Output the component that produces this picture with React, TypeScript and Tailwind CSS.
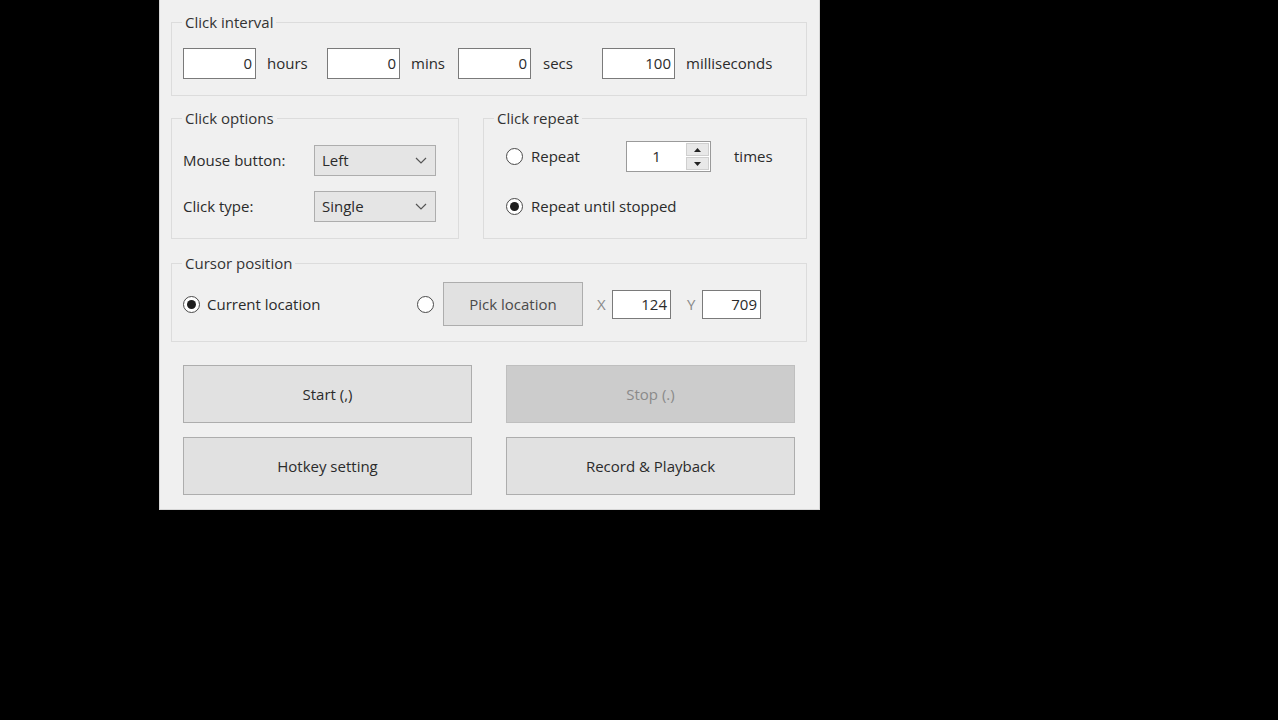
import React from 'react';

const font = { fontFamily: '"Segoe UI", "Open Sans", "Liberation Sans", sans-serif' };

function Radio({ checked }: { checked?: boolean }) {
  return (
    <span className="flex h-[17px] w-[17px] shrink-0 items-center justify-center rounded-full border border-[#4a4a4a] bg-white">
      {checked && <span className="h-[9px] w-[9px] rounded-full bg-[#1e1e1e]" />}
    </span>
  );
}

function NumBox({ value, className }: { value: string; className: string }) {
  return (
    <div className={`flex items-center justify-end border border-[#7a7a7a] bg-white pr-[3px] text-[#2b2b2b] ${className}`}>
      {value}
    </div>
  );
}

function Combo({ value }: { value: string }) {
  return (
    <div className="flex h-[31px] w-[122px] items-center justify-between border border-[#adadad] bg-[#e5e5e5] pl-[7px] pr-[8px] text-[#2b2b2b]">
      <span>{value}</span>
      <svg width="12" height="7" viewBox="0 0 12 7">
        <path d="M1 1l5 5 5-5" stroke="#555" strokeWidth="1.2" fill="none" />
      </svg>
    </div>
  );
}

// groupbox: fieldset + legend, padding lives on the inner div so the legend stays put
function Group({ title, className, children }: { title: string; className: string; children: React.ReactNode }) {
  return (
    <fieldset className={`border border-[#dcdcdc] ${className}`}>
      <legend className="ml-[10px] px-[3px] text-[15px] leading-[18px] text-[#333]">{title}</legend>
      {children}
    </fieldset>
  );
}

function WinButton({ label, disabled }: { label: string; disabled?: boolean }) {
  return (
    <div
      className={`flex h-[58px] w-[289px] items-center justify-center border ${
        disabled ? 'border-[#bfbfbf] bg-[#cccccc] text-[#8a8a8a]' : 'border-[#adadad] bg-[#e1e1e1] text-[#2b2b2b]'
      }`}
    >
      {label}
    </div>
  );
}

export default function App() {
  return (
    <div className="min-h-screen bg-black" style={font}>
      <div className="ml-[159px] h-[510px] w-[661px] border-x border-b border-[#d6d6d6] bg-[#f0f0f0] pl-[11px] pr-[12px] pt-[13px] text-[15px] text-[#2b2b2b]">
        {/* Click interval */}
        <Group title="Click interval" className="pb-[16px]">
          <div className="flex items-center pl-[11px] pt-[17px]">
            <NumBox value="0" className="h-[31px] w-[73px]" />
            <span className="ml-[11px] w-[60px]">hours</span>
            <NumBox value="0" className="h-[31px] w-[73px]" />
            <span className="ml-[11px] w-[47px]">mins</span>
            <NumBox value="0" className="h-[31px] w-[73px]" />
            <span className="ml-[12px] w-[59px]">secs</span>
            <NumBox value="100" className="h-[31px] w-[73px]" />
            <span className="ml-[11px]">milliseconds</span>
          </div>
        </Group>

        {/* Options + repeat */}
        <div className="mt-[13px] flex gap-[24px]">
          <Group title="Click options" className="w-[288px] pb-[16px]">
            <div className="flex flex-col gap-[15px] pl-[11px] pt-[18px]">
              <div className="flex items-center">
                <span className="w-[131px]">Mouse button:</span>
                <Combo value="Left" />
              </div>
              <div className="flex items-center">
                <span className="w-[131px]">Click type:</span>
                <Combo value="Single" />
              </div>
            </div>
          </Group>

          <Group title="Click repeat" className="w-[324px] pb-[22px]">
            <div className="flex flex-col gap-[24px] pl-[22px] pt-[14px]">
              <div className="flex h-[31px] items-center">
                <div className="flex w-[120px] items-center gap-[8px]">
                  <Radio />
                  <span>Repeat</span>
                </div>
                <div className="flex h-[31px] w-[85px] border border-[#9a9a9a] bg-white">
                  <span className="flex flex-1 items-center justify-center">1</span>
                  <div className="flex w-[24px] flex-col gap-[1px] py-[1px] pr-[1px]">
                    <div className="flex flex-1 items-center justify-center border border-[#cfcfcf] bg-[#e8e8e8]">
                      <svg width="7" height="4" viewBox="0 0 7 4">
                        <path d="M0 4L3.5 0L7 4Z" fill="#222" />
                      </svg>
                    </div>
                    <div className="flex flex-1 items-center justify-center border border-[#cfcfcf] bg-[#e8e8e8]">
                      <svg width="7" height="4" viewBox="0 0 7 4">
                        <path d="M0 0L3.5 4L7 0Z" fill="#222" />
                      </svg>
                    </div>
                  </div>
                </div>
                <span className="ml-[23px]">times</span>
              </div>
              <div className="flex h-[20px] items-center gap-[8px]">
                <Radio checked />
                <span>Repeat until stopped</span>
              </div>
            </div>
          </Group>
        </div>

        {/* Cursor position */}
        <Group title="Cursor position" className="mt-[15px] pb-[15px]">
          <div className="flex items-center pl-[11px] pt-[10px]">
            <div className="flex w-[234px] items-center gap-[7px]">
              <Radio checked />
              <span>Current location</span>
            </div>
            <Radio />
            <div className="ml-[9px] flex h-[44px] w-[140px] items-center justify-center border border-[#adadad] bg-[#e1e1e1] text-[#4a4a4a]">
              Pick location
            </div>
            <span className="ml-[14px] w-[15px] text-[#8a8a8a]">X</span>
            <NumBox value="124" className="h-[29px] w-[59px]" />
            <span className="ml-[16px] w-[15px] text-[#8a8a8a]">Y</span>
            <NumBox value="709" className="h-[29px] w-[59px]" />
          </div>
        </Group>

        {/* Action buttons */}
        <div className="mt-[23px] grid grid-cols-[289px_289px] gap-x-[34px] gap-y-[14px] pl-[12px]">
          <WinButton label="Start (,)" />
          <WinButton label="Stop (.)" disabled />
          <WinButton label="Hotkey setting" />
          <WinButton label="Record & Playback" />
        </div>
      </div>
    </div>
  );
}
